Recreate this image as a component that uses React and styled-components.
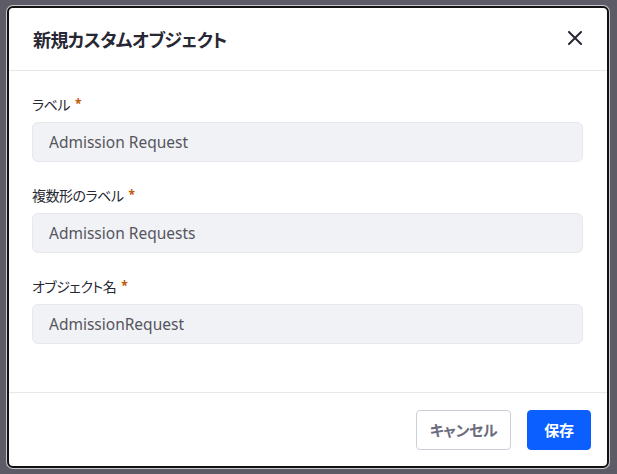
import styled, { createGlobalStyle } from "styled-components";

const GlobalStyle = createGlobalStyle`
    html, body {
        margin: 0;
        padding: 0;
        background: #5d5b66;
        font-family: "Noto Sans", "Noto Sans CJK JP", sans-serif;
    }
`;

const fields = [
    { label: "ラベル", value: "Admission Request" },
    { label: "複数形のラベル", value: "Admission Requests" },
    { label: "オブジェクト名", value: "AdmissionRequest" },
];

const App = () => {
    return (
        <>
            <GlobalStyle />
            <Backdrop>
                <Modal>
                    <Header>
                        <Title>新規カスタムオブジェクト</Title>
                        <CloseButton aria-label="close">
                            <svg width="14" height="14" viewBox="0 0 14 14">
                                <path d="M1 1L13 13M13 1L1 13" stroke="#272833" strokeWidth="2" strokeLinecap="round" />
                            </svg>
                        </CloseButton>
                    </Header>
                    <Body>
                        {fields.map((f) => (
                            <Field key={f.label}>
                                <Label>
                                    {f.label}
                                    <Required>*</Required>
                                </Label>
                                <Input defaultValue={f.value} />
                            </Field>
                        ))}
                    </Body>
                    <Footer>
                        <Button $width="95px">キャンセル</Button>
                        <Button $primary $width="64px">保存</Button>
                    </Footer>
                </Modal>
            </Backdrop>
        </>
    );
};

export default App;

const Backdrop = styled.div`
    width: 617px;
    height: 474px;
    padding: 6px 0 0 7px;
    box-sizing: border-box;
`;

const Modal = styled.div`
    width: 602px;
    height: 462px;
    box-sizing: border-box;
    background: #fff;
    border: 2px solid #111;
    border-radius: 6px;
    box-shadow: 0 0 0 1px #c9c9d0;
    display: flex;
    flex-direction: column;
`;

const Header = styled.div`
    height: 62px;
    border-bottom: 1px solid #e7e7ed;
    display: flex;
    align-items: center;
    justify-content: space-between;
    padding: 0 22px 0 24px;
    flex-shrink: 0;
`;

const Title = styled.h1`
    margin: 0;
    font-size: 18px;
    font-weight: 700;
    color: #272833;
    font-feature-settings: "palt";
    letter-spacing: -0.6px;
`;

const CloseButton = styled.button`
    background: none;
    border: none;
    padding: 0;
    width: 20px;
    height: 20px;
    display: flex;
    align-items: center;
    justify-content: center;
    margin-top: -2px;
`;

const Body = styled.div`
    flex: 1;
    padding: 25px 24px 0 23px;
    display: flex;
    flex-direction: column;
    gap: 25px;
`;

const Field = styled.div`
    display: flex;
    flex-direction: column;
    gap: 8px;
`;

const Label = styled.label`
    font-size: 14px;
    font-weight: 400;
    color: #272833;
    font-feature-settings: "palt";
    letter-spacing: -0.5px;
    line-height: 18px;
`;

const Required = styled.span`
    color: #c05600;
    margin-left: 5px;
    font-size: 12px;
    font-weight: 700;
    vertical-align: top;
    line-height: 15px;
`;

const Input = styled.input`
    height: 40px;
    box-sizing: border-box;
    width: 100%;
    background: #f1f2f5;
    border: 1px solid #e7e7ed;
    border-radius: 6px;
    padding: 0 16px;
    font-family: "Noto Sans", "Noto Sans CJK JP", sans-serif;
    font-size: 15.5px;
    color: #55555f;
    outline: none;
`;

const Footer = styled.div`
    height: 73px;
    border-top: 1px solid #e7e7ed;
    display: flex;
    align-items: center;
    justify-content: flex-end;
    gap: 16px;
    padding: 0 16px 0 0;
    flex-shrink: 0;
`;

const Button = styled.button`
    height: 40px;
    width: ${(p) => p.$width};
    box-sizing: border-box;
    padding: 0;
    border-radius: 4px;
    border: 1px solid ${(p) => (p.$primary ? "#0b5fff" : "#cdced9")};
    background: ${(p) => (p.$primary ? "#0b5fff" : "#fff")};
    color: ${(p) => (p.$primary ? "#fff" : "#6b6c7e")};
    font-family: "Noto Sans", "Noto Sans CJK JP", sans-serif;
    font-size: 15px;
    font-weight: 700;
    font-feature-settings: "palt";
    letter-spacing: -0.3px;
`;
